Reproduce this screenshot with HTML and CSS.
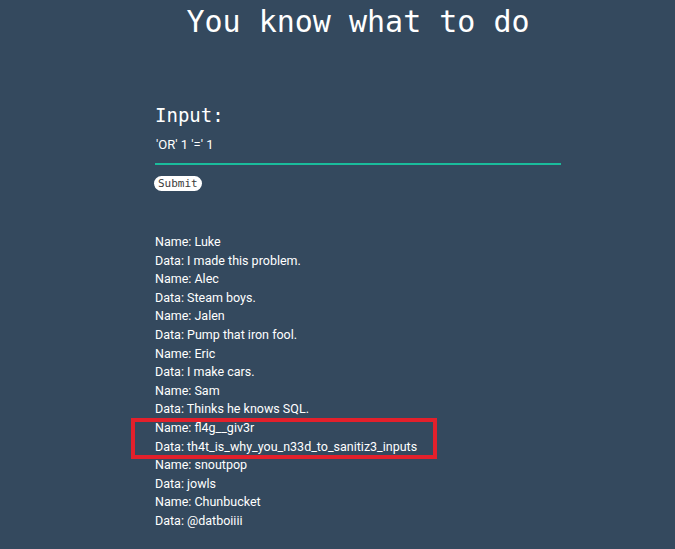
FILE: index.html
```html
<!DOCTYPE html>
<html>
<head>
<meta charset="utf-8">
<title>You know what to do</title>
<link rel="stylesheet" href="styles.css">
</head>
<body>
<div class="wrap">
  <h1 class="title">You know what to do</h1>
  <form class="form">
    <label class="label" for="q">Input:</label>
    <input class="field" id="q" type="text" value="'OR' 1 '=' 1">
    <button class="submit" type="button">Submit</button>
  </form>
  <div class="results">
    <div>Name: Luke</div>
    <div>Data: I made this problem.</div>
    <div>Name: Alec</div>
    <div>Data: Steam boys.</div>
    <div>Name: Jalen</div>
    <div>Data: Pump that iron fool.</div>
    <div>Name: Eric</div>
    <div>Data: I make cars.</div>
    <div>Name: Sam</div>
    <div>Data: Thinks he knows SQL.</div>
    <div class="flag">
      <div>Name: fl4g__giv3r</div>
      <div>Data: th4t_is_why_you_n33d_to_sanitiz3_inputs</div>
    </div>
    <div>Name: snoutpop</div>
    <div>Data: jowls</div>
    <div>Name: Chunbucket</div>
    <div>Data: @datboiiii</div>
  </div>
</div>
</body>
</html>
```

FILE: styles.css
```css
html, body {
  margin: 0;
  padding: 0;
}
body {
  background: #34495e;
  color: #ffffff;
  font-family: Roboto, "Liberation Sans", sans-serif;
  height: 549px;
  overflow: hidden;
}
.wrap {
  margin-left: 155px;
  width: 406px;
}
.title {
  margin: 0;
  padding-top: 4px;
  height: 36px;
  line-height: 36px;
  font-family: "DejaVu Sans Mono", monospace;
  font-size: 30px;
  font-weight: normal;
  text-align: center;
  white-space: nowrap;
}
.form {
  margin: 0;
}
.label {
  display: block;
  margin-top: 64px;
  height: 22px;
  line-height: 22px;
  font-family: "DejaVu Sans Mono", monospace;
  font-size: 19px;
}
.field {
  display: block;
  box-sizing: border-box;
  width: 406px;
  height: 30px;
  margin: 9px 0 0 0;
  padding: 0 0 10px 1px;
  border: none;
  border-bottom: 2px solid #1abc9c;
  background: transparent;
  color: #ffffff;
  font-family: Roboto, "Liberation Sans", sans-serif;
  font-size: 13px;
  line-height: 18px;
  outline: none;
}
.submit {
  display: block;
  margin: 11px 0 0 -1px;
  height: 15px;
  padding: 0 4px;
  border: none;
  border-radius: 7.5px;
  background: #ffffff;
  color: #3a3a3a;
  font-family: "DejaVu Sans Mono", monospace;
  font-size: 11px;
  line-height: 15px;
}
.results {
  margin-top: 42px;
  font-size: 12.5px;
  line-height: 18.6px;
  white-space: nowrap;
}
.flag {
  position: relative;
}
.flag::after {
  content: "";
  position: absolute;
  top: -1px;
  left: -24px;
  width: 306px;
  height: 41px;
  box-sizing: border-box;
  border: 4px solid #e3202b;
}
```
